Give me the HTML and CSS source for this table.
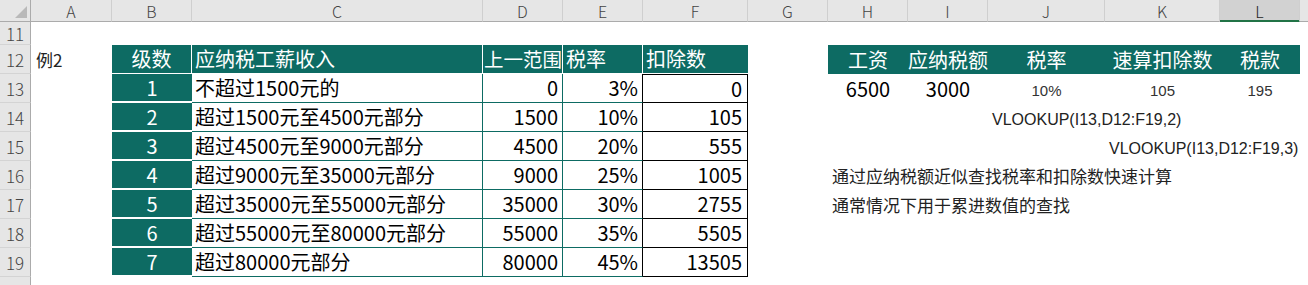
FILE: index.html
```html
<!DOCTYPE html>
<html lang="zh-CN">
<head>
<meta charset="utf-8">
<title>VLOOKUP 例2</title>
<link rel="stylesheet" href="styles.css">
</head>
<body>
<div class="sheet">
  <!-- column headers -->
  <div class="corner"><span class="tri"></span></div>
  <div class="ch">A</div><div class="ch">B</div><div class="ch">C</div><div class="ch">D</div>
  <div class="ch">E</div><div class="ch">F</div><div class="ch">G</div><div class="ch">H</div>
  <div class="ch">I</div><div class="ch">J</div><div class="ch">K</div><div class="ch sel">L</div>
  <div class="ch last"></div>

  <!-- row 11 -->
  <div class="rh">11</div>
  <div></div><div></div><div></div><div></div><div></div><div></div>
  <div></div><div></div><div></div><div></div><div></div><div></div><div></div>

  <!-- row 12 -->
  <div class="rh">12</div>
  <div class="txt">例2</div>
  <div class="hd center">级数</div>
  <div class="hd">应纳税工薪收入</div>
  <div class="hd tight">上一范围</div>
  <div class="hd">税率</div>
  <div class="hd end">扣除数</div>
  <div></div>
  <div class="rhd">工资</div>
  <div class="rhd">应纳税额</div>
  <div class="rhd">税率</div>
  <div class="rhd">速算扣除数</div>
  <div class="rhd">税款</div>
  <div></div>

  <!-- row 13 -->
  <div class="rh">13</div>
  <div></div>
  <div class="lvl">1</div>
  <div class="desc">不超过1500元的</div>
  <div class="num">0</div>
  <div class="num rate">3%</div>
  <div class="ded first">0</div>
  <div></div>
  <div class="big">6500</div>
  <div class="big">3000</div>
  <div class="small">10%</div>
  <div class="small">105</div>
  <div class="small">195</div>
  <div></div>

  <!-- row 14 -->
  <div class="rh">14</div>
  <div></div>
  <div class="lvl">2</div>
  <div class="desc">超过1500元至4500元部分</div>
  <div class="num">1500</div>
  <div class="num rate">10%</div>
  <div class="ded">105</div>
  <div></div><div></div><div></div>
  <div class="formula">VLOOKUP(I13,D12:F19,2)</div>
  <div></div><div></div><div></div>

  <!-- row 15 -->
  <div class="rh">15</div>
  <div></div>
  <div class="lvl">3</div>
  <div class="desc">超过4500元至9000元部分</div>
  <div class="num">4500</div>
  <div class="num rate">20%</div>
  <div class="ded">555</div>
  <div></div><div></div><div></div><div></div>
  <div class="formula">VLOOKUP(I13,D12:F19,3)</div>
  <div></div><div></div>

  <!-- row 16 -->
  <div class="rh">16</div>
  <div></div>
  <div class="lvl">4</div>
  <div class="desc">超过9000元至35000元部分</div>
  <div class="num">9000</div>
  <div class="num rate">25%</div>
  <div class="ded">1005</div>
  <div></div>
  <div class="note">通过应纳税额近似查找税率和扣除数快速计算</div>
  <div></div><div></div><div></div><div></div><div></div>

  <!-- row 17 -->
  <div class="rh">17</div>
  <div></div>
  <div class="lvl">5</div>
  <div class="desc">超过35000元至55000元部分</div>
  <div class="num">35000</div>
  <div class="num rate">30%</div>
  <div class="ded">2755</div>
  <div></div>
  <div class="note">通常情况下用于累进数值的查找</div>
  <div></div><div></div><div></div><div></div><div></div>

  <!-- row 18 -->
  <div class="rh">18</div>
  <div></div>
  <div class="lvl">6</div>
  <div class="desc">超过55000元至80000元部分</div>
  <div class="num">55000</div>
  <div class="num rate">35%</div>
  <div class="ded">5505</div>
  <div></div><div></div><div></div><div></div><div></div><div></div><div></div>

  <!-- row 19 -->
  <div class="rh">19</div>
  <div></div>
  <div class="lvl">7</div>
  <div class="desc">超过80000元部分</div>
  <div class="num">80000</div>
  <div class="num rate">45%</div>
  <div class="ded">13505</div>
  <div></div><div></div><div></div><div></div><div></div><div></div><div></div>

  <!-- row 20 (only its top edge is visible) -->
  <div class="rh"></div>
</div>
</body>
</html>
```

FILE: styles.css
```css
html, body {
  margin: 0;
  padding: 0;
  background: #ffffff;
  overflow: hidden;
}

.sheet {
  display: grid;
  grid-template-columns: 31px 81px 80px 291px 80px 80px 105px 80px 80px 80px 117px 115px 80px 1fr;
  grid-template-rows: 22px 23px repeat(8, 29px) 29px;
  width: 1308px;
  height: 285px;
  overflow: hidden;
  font-family: "Noto Sans CJK SC", "Noto Sans", sans-serif;
  font-size: 20px;
  color: #000;
}

.sheet > div {
  box-sizing: border-box;
  display: flex;
  align-items: center;
  white-space: nowrap;
  min-width: 0;
  line-height: 1;
}

/* headers */
.corner {
  background: #e6e6e6;
  border-right: 1px solid #ababab;
  border-bottom: 1px solid #ababab;
  position: relative;
}
.tri {
  position: absolute;
  right: 3px;
  bottom: 3px;
  width: 0;
  height: 0;
  border-left: 12px solid transparent;
  border-bottom: 12px solid #b9b9b9;
}

.ch {
  background: #e6e6e6;
  border-right: 1px solid #cfcfcf;
  border-bottom: 1px solid #ababab;
  justify-content: center;
  font-size: 16px;
  color: #444;
  font-weight: 300;
}
.ch.sel {
  background: #d2d2d2;
  border-bottom: 1px solid #217346;
  box-shadow: inset 0 -1px 0 #217346;
  color: #262626;
}
.ch.last {
  border-right: none;
}

.rh {
  grid-column: 1;
  background: #e6e6e6;
  border-right: 1px solid #ababab;
  border-bottom: 1px solid #d4d4d4;
  justify-content: center;
  font-size: 17px;
  color: #444;
  font-weight: 300;
}

/* left table */
.txt {
  padding-left: 5px;
  font-size: 17px;
  color: #222;
}

.hd {
  background: #0d6b63;
  color: #fff;
  border-right: 1px solid #ffffff;
  border-bottom: 1px solid #ffffff;
  padding-left: 3px;
}
.hd.center {
  justify-content: center;
  padding-left: 0;
}
.hd.tight {
  padding-left: 1px;
  font-size: 19.5px;
}
.hd.end {
  border-right: none;
}

.lvl {
  background: #0d6b63;
  color: #fff;
  justify-content: center;
  border-bottom: 2px solid #ffffff;
}

.desc {
  padding-left: 3px;
  border-right: 1px solid #0d6b63;
  border-bottom: 1px solid #0d6b63;
}

.num {
  justify-content: flex-end;
  padding-right: 4px;
  border-right: 1px solid #0d6b63;
  border-bottom: 1px solid #0d6b63;
}
.num.rate {
  border-right: 1px solid #000;
}

.ded {
  justify-content: flex-end;
  padding-right: 5px;
  border-right: 1px solid #000;
  border-bottom: 1px solid #000;
}
.ded.first {
  border-top: 1px solid #000;
}

/* right table */
.rhd {
  background: #0d6b63;
  color: #fff;
  justify-content: center;
}

.big {
  justify-content: center;
}

.small {
  justify-content: center;
  font-family: "Liberation Sans", sans-serif;
  font-size: 15px;
  color: #333;
  padding-top: 3px;
}

.formula {
  padding-left: 4px;
  padding-top: 4px;
  font-family: "Liberation Sans", sans-serif;
  font-size: 16px;
  color: #222;
}

.note {
  padding-left: 4px;
  font-size: 17px;
  color: #222;
}
```
